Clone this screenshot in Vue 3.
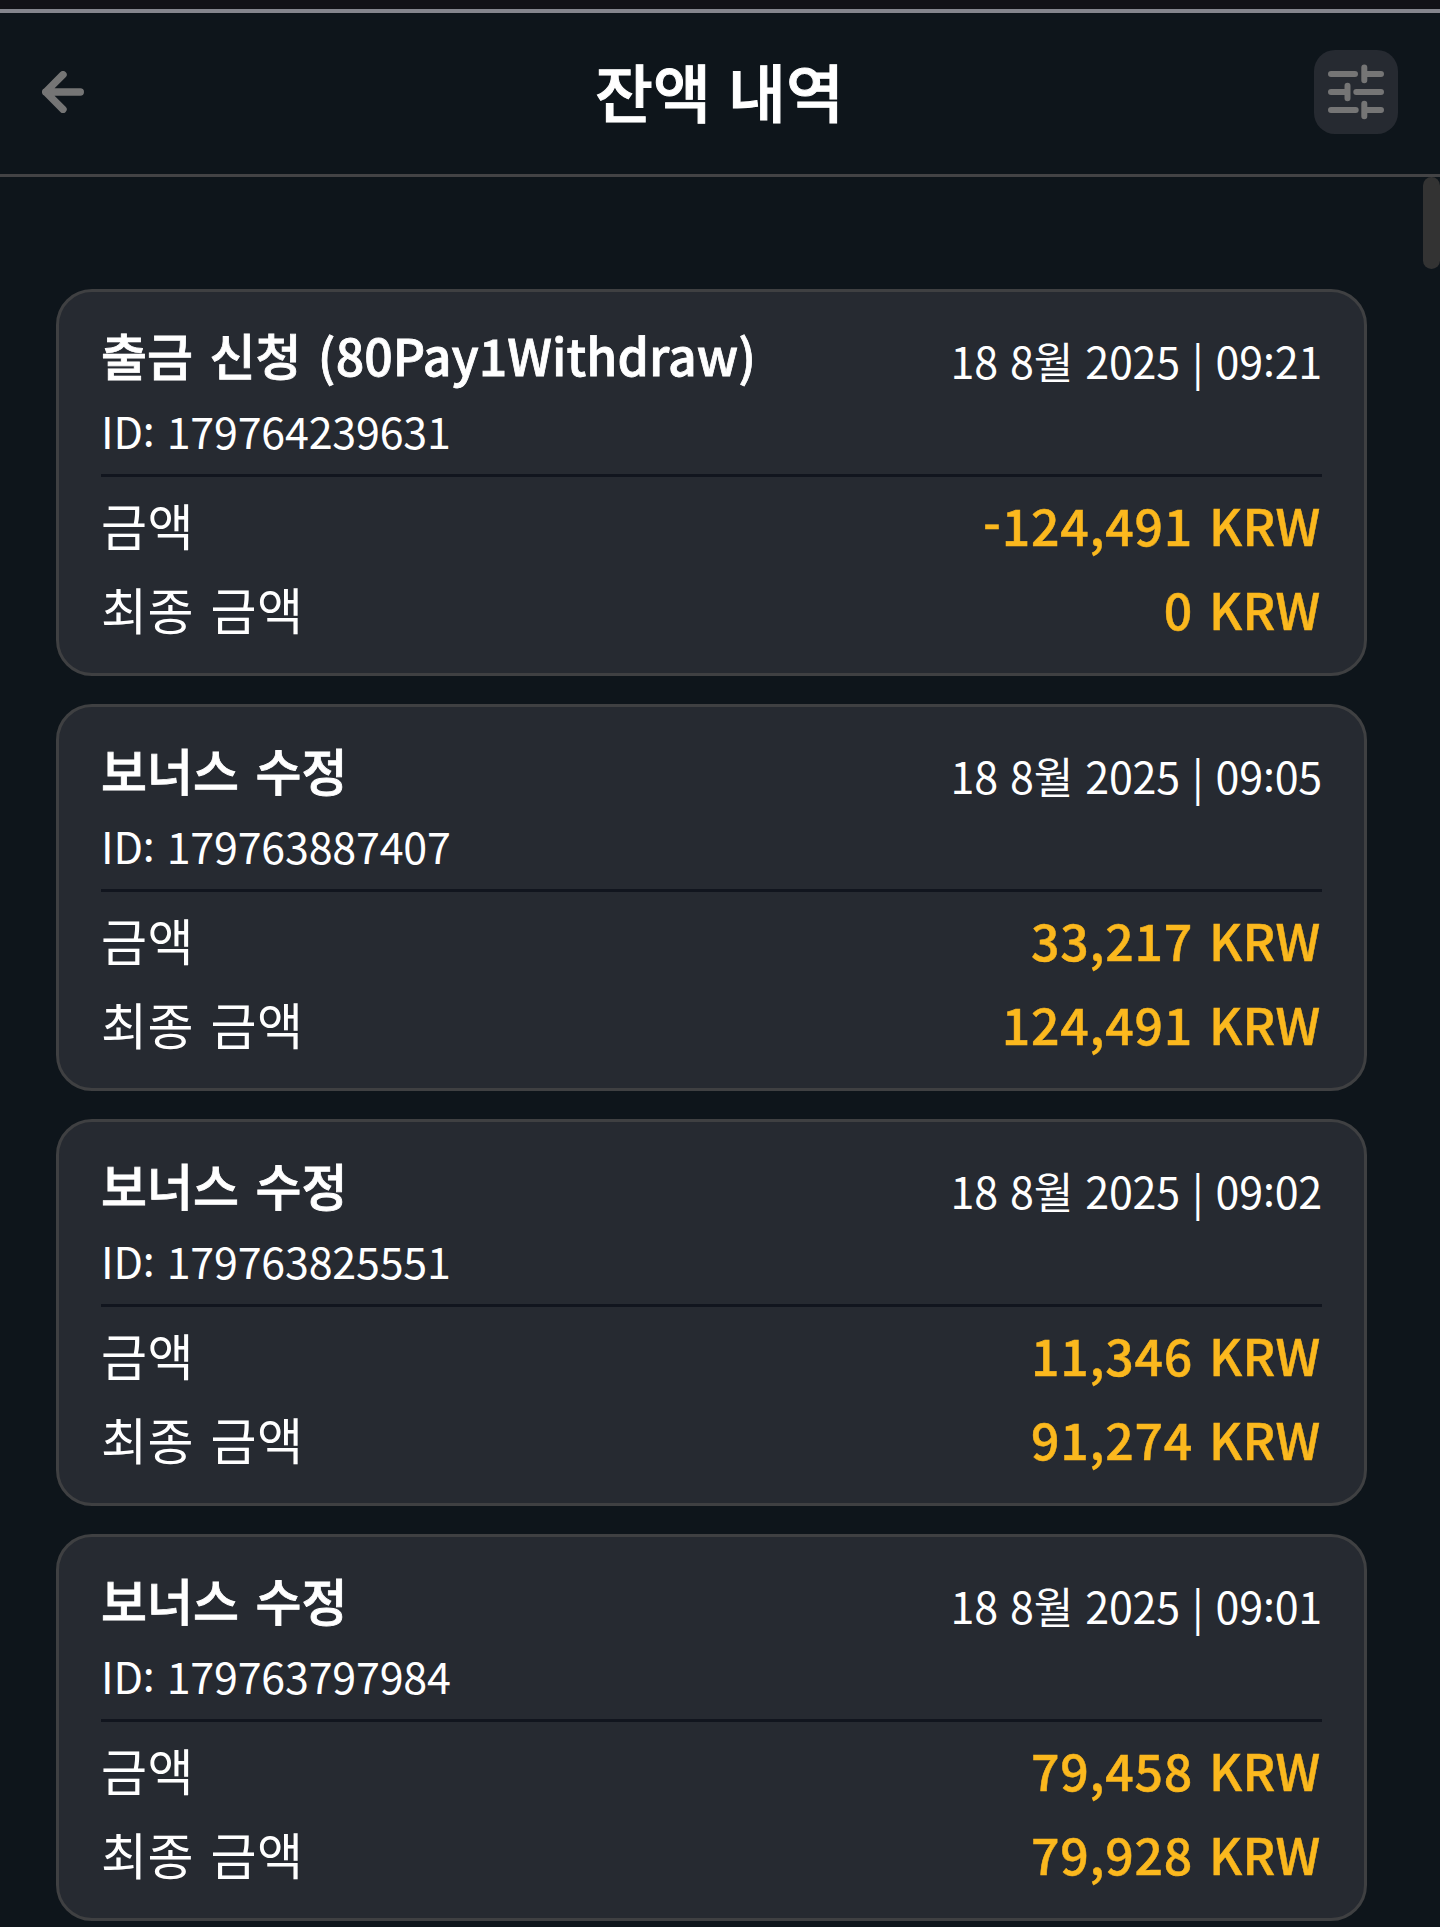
<script setup>
const transactions = [
  { id: '179764239631', title: '출금 신청 (80Pay1Withdraw)', date: '18 8월 2025 | 09:21', amount: '-124,491', total: '0' },
  { id: '179763887407', title: '보너스 수정', date: '18 8월 2025 | 09:05', amount: '33,217', total: '124,491' },
  { id: '179763825551', title: '보너스 수정', date: '18 8월 2025 | 09:02', amount: '11,346', total: '91,274' },
  { id: '179763797984', title: '보너스 수정', date: '18 8월 2025 | 09:01', amount: '79,458', total: '79,928' },
]

// Splits out colons and minus signs, which are centred on the digit height.
const split = (text) => text.split(/([:-])/).filter(Boolean)
const markClass = (part) => ({ colon: part === ':', minus: part === '-' })
</script>

<template>
  <div class="screen">
    <header class="header">
      <button class="back" aria-label="뒤로">
        <svg width="42" height="42" viewBox="0 0 42 42" fill="none" stroke="currentColor" stroke-width="7.4" stroke-linecap="round" stroke-linejoin="round">
          <path d="M21 3.7 3.7 21 21 38.3M3.7 21H38.3" />
        </svg>
      </button>
      <h1 class="title">잔액 내역</h1>
      <button class="filter" aria-label="필터">
        <svg width="84" height="84" viewBox="0 0 84 84" fill="none" stroke="currentColor" stroke-width="6" stroke-linecap="round">
          <path d="M17 24H41M50.3 17.5V30.3M50.3 24H67M17 42H33.5M33.5 35.7V48.3M42.3 42H67M17 60H41.7M50.3 53.7V66.3M50.3 60H67" />
        </svg>
      </button>
    </header>

    <main class="list">
      <div class="scrollbar"></div>
      <article v-for="item in transactions" :key="item.id" class="card">
        <div class="card-head">
          <div>
            <h2 class="card-title">{{ item.title }}</h2>
            <p class="card-id">ID<span class="colon">:</span> {{ item.id }}</p>
          </div>
          <time class="card-date"><span v-for="(part, i) in split(item.date)" :key="i" :class="markClass(part)">{{ part }}</span></time>
        </div>
        <div class="row">
          <span>금액</span>
          <span class="amount"><span v-for="(part, i) in split(item.amount)" :key="i" :class="markClass(part)">{{ part }}</span> <span class="currency">KRW</span></span>
        </div>
        <div class="row">
          <span>최종 금액</span>
          <span class="amount">{{ item.total }} <span class="currency">KRW</span></span>
        </div>
      </article>
    </main>
  </div>
</template>

<style>
body {
  background: #0e151b;
}
</style>

<style scoped>
.screen {
  box-sizing: border-box;
  height: 1927px;
  overflow: hidden;
  border-top: 9px solid #121217;
  background: #0e151b;
  color: #fff;
  font-family: "Noto Sans CJK KR", sans-serif;
}

.header {
  display: flex;
  align-items: center;
  justify-content: space-between;
  box-sizing: border-box;
  height: 168px;
  padding: 0 42px 3px;
  border-top: 4px solid #84858d;
  border-bottom: 3px solid #434345;
}

.back,
.filter {
  display: flex;
  padding: 0;
  border: 0;
  background: none;
  color: #757575;
}

.back {
  width: 84px;
}

.filter {
  border-radius: 21px;
  background: #262a31;
}

.title {
  margin: 0 1px 4px 0;
  font-size: 63px;
  font-weight: 500;
  line-height: 90px;
  word-spacing: 3px;
  -webkit-text-stroke: 1px currentColor;
}

.list {
  position: relative;
  display: flex;
  flex-direction: column;
  gap: 28px;
  padding: 112px 73px 0 56px;
}

.scrollbar {
  position: absolute;
  top: 0;
  right: 0;
  width: 17px;
  height: 92px;
  border-radius: 9px;
  background: #333;
}

.card {
  box-sizing: border-box;
  height: 387px;
  padding: 32px 42px 0;
  border: 3px solid #3f4042;
  border-radius: 36px;
  background: #262a31;
}

.card-head {
  display: flex;
  justify-content: space-between;
  align-items: flex-start;
  margin-bottom: 5px;
  padding-bottom: 16px;
  border-bottom: 3px solid #11151e;
}

.card-title {
  margin: 0;
  font-size: 50px;
  font-weight: 500;
  line-height: 60px;
  letter-spacing: 0.02px;
  word-spacing: 5.1px;
  -webkit-text-stroke: 0.8px currentColor;
}

.card-id {
  margin: 18px 0 0;
  font-size: 43px;
  line-height: 56px;
  letter-spacing: -0.2px;
  word-spacing: 2.7px;
}

.card-date {
  padding-top: 6px;
  font-size: 43px;
  line-height: 60px;
  letter-spacing: -0.2px;
  word-spacing: 2.7px;
}

.row {
  display: flex;
  justify-content: space-between;
  font-size: 50px;
  line-height: 84px;
  letter-spacing: 0.6px;
  word-spacing: 4.4px;
}

.amount {
  padding-right: 1.6px;
  color: #fbb81e;
  font-weight: 500;
  letter-spacing: 0.8px;
  word-spacing: 3.9px;
  -webkit-text-stroke: 0.5px currentColor;
}

.currency {
  letter-spacing: 0.1px;
}

.colon,
.minus {
  line-height: 0;
  vertical-align: 3px;
}

.minus {
  vertical-align: 5px;
}
</style>
